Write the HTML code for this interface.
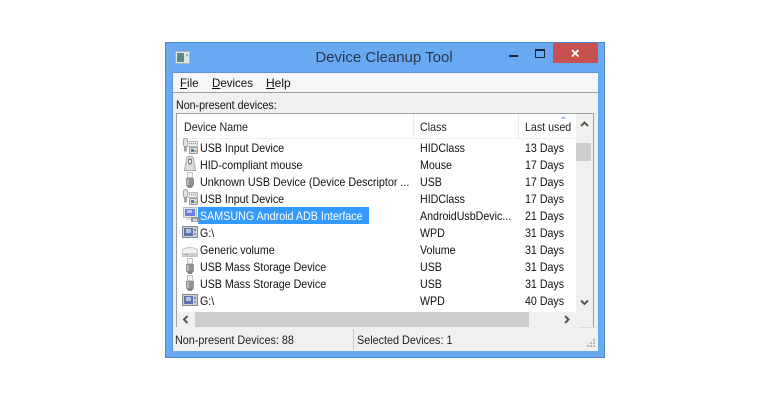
<!DOCTYPE html>
<html><head><meta charset="utf-8">
<style>
html,body{margin:0;padding:0;width:770px;height:400px;background:#fff;overflow:hidden}
*{box-sizing:border-box}
body{font:12px "Liberation Sans",sans-serif;color:#000;position:relative}
.a{position:absolute;white-space:nowrap}
.t{transform:scaleX(.888);transform-origin:0 0}
.r{line-height:17px;height:17px;color:#111;transform:scaleX(.888);transform-origin:0 0}
u{text-decoration:underline}
svg{position:absolute;overflow:visible}
</style></head><body>
<div class="a" style="left:165px;top:42px;width:440px;height:316px;background:#69a9f2;border:1px solid #4f86c4"></div>
<!-- title icon -->
<svg style="left:175px;top:51px" width="16" height="14"><rect x=".5" y=".5" width="14" height="12" fill="#dfe6e6" stroke="#a8b6bc"/><rect x="2" y="2" width="7" height="9" fill="#5f8a82"/><rect x="11" y="3" width="2" height="2" fill="#9fb2b6"/></svg>
<div class="a" style="left:164px;width:440px;top:49px;text-align:center;font-size:15px;line-height:18px;color:#27374f">Device Cleanup Tool</div>
<div class="a" style="left:509px;top:55px;width:9px;height:2px;background:#1b2440"></div>
<div class="a" style="left:535px;top:49px;width:10px;height:9px;border:1px solid #1b2440;border-top-width:2px"></div>
<div class="a" style="left:553px;top:43px;width:45px;height:20px;background:#c75050"></div>
<svg style="left:571px;top:49px" width="9" height="9"><path d="M1 1L7.500 7.500M7.500 1L1 7.500" stroke="#fff" stroke-width="1.800"/></svg>
<!-- client -->
<div class="a" style="left:172px;top:72px;width:426px;height:279px;background:#f0f0f0;border:1px solid #5d94d6;border-width:1px 0 0 1px"></div>
<div class="a" style="left:173px;top:73px;width:425px;height:20px;background:#f5f6f7;border-bottom:1px solid #a0a0a0"></div>
<div class="a" style="left:180px;top:76px;line-height:14px;color:#111;transform:scaleX(.96);transform-origin:0 0"><u>F</u>ile</div>
<div class="a" style="left:212px;top:76px;line-height:14px;color:#111;transform:scaleX(.96);transform-origin:0 0"><u>D</u>evices</div>
<div class="a" style="left:266px;top:76px;line-height:14px;color:#111"><u>H</u>elp</div>
<div class="a t" style="left:176px;top:98px;line-height:14px;color:#111">Non-present devices:</div>
<!-- list -->
<div class="a" style="left:176px;top:113px;width:418px;height:214px;background:#fff;border:1px solid #a0a0a0;border-bottom:0"></div>
<div class="a" style="left:177px;top:138px;width:398px;height:1px;background:#e8eff7"></div>
<div class="a" style="left:413px;top:114px;width:1px;height:24px;background:#e3ecf6"></div>
<div class="a" style="left:518px;top:114px;width:1px;height:24px;background:#e3ecf6"></div>
<div class="a t" style="left:184px;top:120px;line-height:14px;color:#222">Device Name</div>
<div class="a t" style="left:420px;top:120px;line-height:14px;color:#222">Class</div>
<div class="a t" style="left:525px;top:120px;line-height:14px;color:#222">Last used</div>
<svg style="left:560px;top:115px" width="8" height="5"><path d="M.5 4L3.500 .8L6.500 4Z" fill="#a9c6e2"/></svg>
<!-- vscroll -->
<div class="a" style="left:576px;top:114px;width:17px;height:198px;background:#f0f0f0"></div>
<svg style="left:580px;top:120px" width="10" height="8"><path d="M1 6L4.500 2.500L8 6" fill="none" stroke="#505a46" stroke-width="2"/></svg>
<div class="a" style="left:576px;top:143px;width:15px;height:18px;background:#cdcdcd"></div>
<svg style="left:580px;top:299px" width="10" height="8"><path d="M1 1.500L4.500 5L8 1.500" fill="none" stroke="#505a46" stroke-width="2"/></svg>
<!-- hscroll -->
<div class="a" style="left:177px;top:312px;width:416px;height:15px;background:#f0f0f0"></div>
<div class="a" style="left:195px;top:312px;width:334px;height:15px;background:#cdcdcd"></div>
<svg style="left:182px;top:315px" width="8" height="10"><path d="M5.500 1L2 4.500L5.500 8" fill="none" stroke="#505a46" stroke-width="2"/></svg>
<svg style="left:563px;top:315px" width="8" height="10"><path d="M2 1L5.500 4.500L2 8" fill="none" stroke="#505a46" stroke-width="2"/></svg>

<!-- selection -->
<div class="a" style="left:198px;top:207px;width:171px;height:17px;background:#3399ff"></div>

<!-- rows -->
<div class="a r" style="left:200px;top:140px">USB Input Device</div><div class="a r" style="left:420px;top:140px">HIDClass</div><div class="a r" style="left:525px;top:140px">13 Days</div>
<div class="a r" style="left:200px;top:157px">HID-compliant mouse</div><div class="a r" style="left:420px;top:157px">Mouse</div><div class="a r" style="left:525px;top:157px">17 Days</div>
<div class="a r" style="left:200px;top:174px;transform:scaleX(.897)">Unknown USB Device (Device Descriptor ...</div><div class="a r" style="left:420px;top:174px">USB</div><div class="a r" style="left:525px;top:174px">17 Days</div>
<div class="a r" style="left:200px;top:191px">USB Input Device</div><div class="a r" style="left:420px;top:191px">HIDClass</div><div class="a r" style="left:525px;top:191px">17 Days</div>
<div class="a r" style="left:200px;top:208px;color:#fff;transform:scaleX(.893)">SAMSUNG Android ADB Interface</div><div class="a r" style="left:420px;top:208px">AndroidUsbDevic...</div><div class="a r" style="left:525px;top:208px">21 Days</div>
<div class="a r" style="left:200px;top:225px">G:\</div><div class="a r" style="left:420px;top:225px">WPD</div><div class="a r" style="left:525px;top:225px">31 Days</div>
<div class="a r" style="left:200px;top:242px">Generic volume</div><div class="a r" style="left:420px;top:242px">Volume</div><div class="a r" style="left:525px;top:242px">31 Days</div>
<div class="a r" style="left:200px;top:259px">USB Mass Storage Device</div><div class="a r" style="left:420px;top:259px">USB</div><div class="a r" style="left:525px;top:259px">31 Days</div>
<div class="a r" style="left:200px;top:276px">USB Mass Storage Device</div><div class="a r" style="left:420px;top:276px">USB</div><div class="a r" style="left:525px;top:276px">31 Days</div>
<div class="a r" style="left:200px;top:293px">G:\</div><div class="a r" style="left:420px;top:293px">WPD</div><div class="a r" style="left:525px;top:293px">40 Days</div>

<!-- icons -->
<svg width="0" height="0"><defs>
<g id="inp"><rect x="1.500" y=".5" width="4" height="8" rx="2" fill="#e2e2e2" stroke="#a0a0a0"/><rect x="2" y="8.500" width="3" height="5" fill="#a4a4a4"/><rect x="5.500" y="3.500" width="10" height="5" fill="#e8e8e8" stroke="#b8b8b8"/><path d="M7 5.500H14" stroke="#8f8f8f" stroke-dasharray="1 1"/><rect x="7.500" y="9.500" width="8" height="6" rx="1" fill="#dfe3e6" stroke="#8d979f"/><rect x="9" y="11" width="3" height="3" fill="#4f80b4"/><rect x="12.500" y="12" width="2" height="2" fill="#c8a640"/></g>
<g id="usb"><rect x="1.500" y=".5" width="5" height="5" fill="#f4f4f4" stroke="#c4c4c4"/><rect x="0" y="6" width="8" height="7" fill="#8f948f"/><path d="M0 13L8 13L5.500 16L2.500 16Z" fill="#838682"/><rect x="1" y="7" width="2" height="6" fill="#b6bab6"/></g>
<g id="wpd"><rect x=".5" y=".5" width="15" height="11" fill="#cfd2d4" stroke="#858a8e"/><rect x="2" y="2" width="9" height="8" fill="#5a74b0"/><rect x="4" y="3" width="5" height="4" fill="#b4c0e4"/><rect x="12" y="3" width="2" height="2" fill="#7a7f84"/><rect x="12" y="7" width="2" height="2" fill="#9a9ea3"/></g>
</defs></svg>
<svg style="left:182px;top:138px" width="17" height="17"><use href="#inp"/></svg>
<svg style="left:183px;top:156px" width="17" height="17"><path d="M6 .5C3.500 .5 3 3 3 6C3 9 1.500 12 1.500 14.500L12.500 14.500C12.500 12 11 9 11 6C11 3 10.500 .5 8 .5Z" fill="#dedede" stroke="#a8a8a8"/><rect x="5" y="2.500" width="4" height="6" rx="2" fill="#7c7c7c"/><rect x="6" y="4" width="2" height="3" fill="#f0f0f0"/></svg>
<svg style="left:186px;top:172px" width="13" height="18"><use href="#usb"/></svg>
<svg style="left:182px;top:189px" width="17" height="17"><use href="#inp"/></svg>
<svg style="left:183px;top:207px" width="17" height="17"><rect x=".5" y=".5" width="13" height="10" fill="#dfe4ec" stroke="#b6bcc4"/><rect x="2" y="2" width="10" height="7" fill="#6a80dc"/><rect x="4" y="3" width="5" height="3" fill="#b8c4f2"/><rect x="3" y="11" width="8" height="2" fill="#dcdcdc"/><rect x="8" y="10" width="8" height="5" fill="#95999d"/><rect x="10" y="12" width="4" height="2" fill="#d8dade"/></svg>
<svg style="left:182px;top:226px" width="17" height="17"><use href="#wpd"/></svg>
<svg style="left:182px;top:243px" width="17" height="17"><path d="M.5 8.500C.5 5.500 4.500 4.500 8 4.500C11.500 4.500 15.500 5.500 15.500 8.500L15.500 13.500L.5 13.500Z" fill="#f2f2f2" stroke="#c4c4c4"/><rect x="1" y="10" width="14" height="3" fill="#ccd0d0"/><rect x="3" y="11" width="3" height="1" fill="#8aa888"/></svg>
<svg style="left:186px;top:258px" width="13" height="18"><use href="#usb"/></svg>
<svg style="left:186px;top:275px" width="13" height="18"><use href="#usb"/></svg>
<svg style="left:182px;top:294px" width="17" height="17"><use href="#wpd"/></svg>

<!-- status -->
<div class="a" style="left:353px;top:329px;width:1px;height:21px;background:#c8c8c8"></div>
<div class="a" style="left:175px;top:333px;line-height:14px;color:#222;transform:scaleX(.9);transform-origin:0 0">Non-present Devices: 88</div>
<div class="a" style="left:357px;top:333px;line-height:14px;color:#222;transform:scaleX(.9);transform-origin:0 0">Selected Devices: 1</div>
<div class="a" style="left:578px;top:327px;width:20px;height:1px;background:#dcdcdc"></div>
<svg style="left:586px;top:339px" width="11" height="10" fill="#b8b8b8"><rect x="7" y="0" width="2" height="2"/><rect x="4" y="3" width="2" height="2"/><rect x="7" y="3" width="2" height="2"/><rect x="1" y="6" width="2" height="2"/><rect x="4" y="6" width="2" height="2"/><rect x="7" y="6" width="2" height="2"/></svg>
</body></html>
